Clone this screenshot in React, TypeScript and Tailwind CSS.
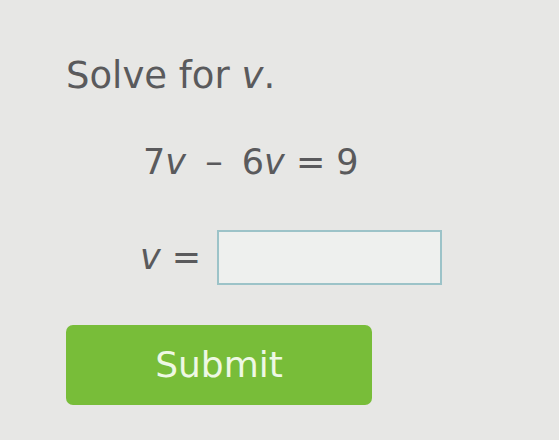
export default function App() {
  return (
    <div
      className="h-[440px] w-[559px] overflow-hidden bg-[#e7e7e5] text-[#5a5a5c]"
      style={{ fontFamily: '"DejaVu Sans", Verdana, sans-serif' }}
    >
      <div className="pl-[66px] pt-[50px]">
        <h1 className="text-[37px] leading-[52px]">
          Solve for <i>v</i>.
        </h1>
        <div className="mt-[36px] pl-[77px] text-[35px] leading-[48px]">
          7<i>v</i> <span className="mx-[8px]">&ndash;</span> 6<i>v</i> = 9
        </div>
        <div className="mt-[44px] flex items-center pl-[74px] text-[35px]">
          <span className="w-[77px]">
            <i>v</i> =
          </span>
          <input
            type="text"
            className="h-[55px] w-[225px] border-2 border-[#9cc3c8] bg-[#eef0ee] outline-none"
          />
        </div>
        <button className="mt-[40px] flex h-[80px] w-[306px] items-center justify-center rounded-[7px] bg-[#78bd39] text-[36px] text-[#eef8e4]">
          Submit
        </button>
      </div>
    </div>
  );
}
